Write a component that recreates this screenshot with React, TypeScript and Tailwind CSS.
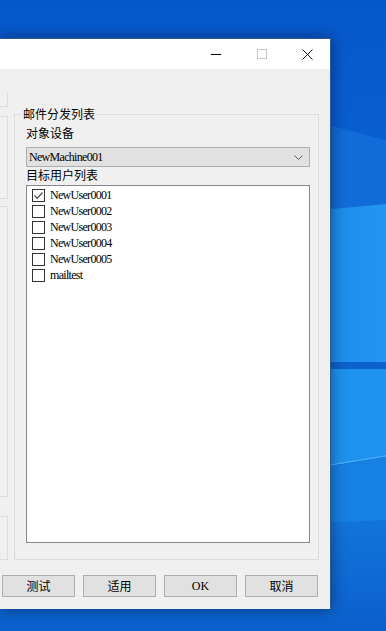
import React from 'react';

const users = [
  { name: 'NewUser0001', checked: true },
  { name: 'NewUser0002', checked: false },
  { name: 'NewUser0003', checked: false },
  { name: 'NewUser0004', checked: false },
  { name: 'NewUser0005', checked: false },
  { name: 'mailtest', checked: false },
];

const Wallpaper = () => (
  <svg className="absolute inset-0" width="386" height="631" viewBox="0 0 386 631">
    <defs>
      <linearGradient id="bg" x1="0" y1="0" x2="0" y2="1">
        <stop offset="0" stopColor="#0757cc" />
        <stop offset="0.35" stopColor="#0a62d4" />
        <stop offset="1" stopColor="#0b66d3" />
      </linearGradient>
      <linearGradient id="mid" x1="0" y1="0" x2="1" y2="0">
        <stop offset="0" stopColor="#1987e8" />
        <stop offset="1" stopColor="#2396f1" />
      </linearGradient>
      <linearGradient id="low" x1="0" y1="0" x2="0" y2="1">
        <stop offset="0" stopColor="#1274db" />
        <stop offset="1" stopColor="#0b5fcd" />
      </linearGradient>
    </defs>
    <rect width="386" height="631" fill="url(#bg)" />
    <polygon points="300,118 386,140 386,205 300,214" fill="#116bd9" />
    <polygon points="300,212 386,204 386,362 300,362" fill="url(#mid)" />
    <rect x="300" y="362" width="86" height="7" fill="#0b62cc" />
    <polygon points="300,369 386,369 386,456 300,470" fill="#1f91ee" />
    <line x1="300" y1="470" x2="386" y2="456" stroke="#45acf6" strokeWidth="1.5" />
    <polygon points="300,471 386,457 386,520 300,536" fill="#1780e3" />
    <polygon points="0,536 386,520 386,631 0,631" fill="url(#low)" />
  </svg>
);

const CheckBox = ({ checked }: { checked: boolean }) => (
  <span className="flex w-[13px] h-[13px] shrink-0 items-center justify-center border border-[#333333] bg-white">
    {checked && (
      <svg width="11" height="11" viewBox="0 0 11 11">
        <path d="M1.5 5.5 L4.2 8.2 L9.5 2.5" fill="none" stroke="#555555" strokeWidth="1.3" />
      </svg>
    )}
  </span>
);

const Button = ({ label, serif }: { label: string; serif?: boolean }) => (
  <button
    className={
      serif
        ? "flex h-[22px] w-[73px] items-center justify-center border border-[#adadad] bg-[#e1e1e1] text-[12px] text-black font-['Liberation_Serif',serif]"
        : "flex h-[22px] w-[73px] items-center justify-center border border-[#adadad] bg-[#e1e1e1] text-[12px] text-black font-['Noto_Sans_CJK_SC',sans-serif]"
    }
  >
    {label}
  </button>
);

const App = () => {
  return (
    <div className="relative w-[386px] h-[631px] overflow-hidden bg-[#0a62d4]">
      <Wallpaper />

      <div className="relative mt-[38px] flex h-[571px] w-[331px] flex-col border-t border-r border-[#2b5a9a] shadow-[0_0_14px_rgba(0,0,0,0.45)]">
        {/* title bar */}
        <div className="flex h-[30px] items-center justify-end bg-white">
          <div className="flex h-full w-[46px] items-center justify-center">
            <div className="h-[1px] w-[10px] bg-black" />
          </div>
          <div className="flex h-full w-[46px] items-center justify-center">
            <div className="h-[10px] w-[10px] border border-[#c4c4c4]" />
          </div>
          <div className="flex h-full w-[45px] items-center justify-center">
            <svg width="11" height="11" viewBox="0 0 11 11">
              <path d="M0.5 0.5 L10.5 10.5 M10.5 0.5 L0.5 10.5" stroke="#111111" strokeWidth="1" />
            </svg>
          </div>
        </div>

        {/* client area */}
        <div className="flex flex-1 flex-col bg-[#f0f0f0]">
          <div className="flex">
            {/* cut-off panels on the left */}
            <div className="flex w-[8px] flex-col">
              <div className="mt-[23px] h-[15px] border-r border-b border-[#dcdcdc]" />
              <div className="mt-[9px] h-[83px] border-t border-r border-b border-[#dcdcdc]" />
              <div className="mt-[7px] h-[291px] border-t border-r border-b border-[#dcdcdc]" />
              <div className="mt-[19px] h-[44px] border-t border-r border-b border-[#dcdcdc]" />
            </div>

            {/* group box */}
            <div className="ml-[6px] mt-[45px] flex h-[446px] w-[305px] flex-col border border-[#dcdcdc] pl-[11px] pr-[8px] font-['Noto_Sans_CJK_SC',sans-serif] text-[12px] text-black">
              <span className="-mt-[9px] -ml-[5px] block w-fit bg-[#f0f0f0] px-[2px] leading-[16px]">邮件分发列表</span>
              <span className="mt-[3px] leading-[16px]">对象设备</span>
              <div className="mt-[6px] flex h-[20px] items-center justify-between border border-[#adadad] bg-[#e1e1e1] pl-[2px] pr-[6px]">
                <span className="font-['Liberation_Serif',serif] text-[12px] tracking-[-0.7px]">NewMachine001</span>
                <svg width="9" height="5" viewBox="0 0 9 5">
                  <path d="M0.5 0.5 L4.5 4.5 L8.5 0.5" fill="none" stroke="#555555" strokeWidth="1" />
                </svg>
              </div>
              <span className="leading-[16px]">目标用户列表</span>
              <div className="mt-[2px] flex h-[358px] flex-col border border-[#828790] bg-white pl-[5px] pt-[1px]">
                {users.map((u) => (
                  <div key={u.name} className="flex h-[16px] items-center gap-[5px]">
                    <CheckBox checked={u.checked} />
                    <span className="font-['Liberation_Serif',serif] text-[12px] leading-[16px] tracking-[-0.7px]">{u.name}</span>
                  </div>
                ))}
              </div>
            </div>
          </div>

          {/* buttons */}
          <div className="mt-[15px] flex gap-[8px] pl-[2px]">
            <Button label="测试" />
            <Button label="适用" />
            <Button label="OK" serif />
            <Button label="取消" />
          </div>
        </div>
      </div>
    </div>
  );
};

export default App;
